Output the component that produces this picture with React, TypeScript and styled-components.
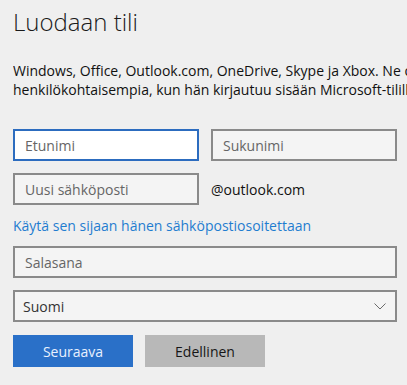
import React from "react";
import styled, { createGlobalStyle } from "styled-components";

const GlobalStyle = createGlobalStyle`
  html, body {
    margin: 0;
    padding: 0;
    background: #efefef;
    overflow: hidden;
  }
  body {
    font-family: "Open Sans", "Noto Sans", sans-serif;
    color: #000;
  }
`;

class App extends React.Component {
  render() {
    return (
      <Page>
        <GlobalStyle />
        <Title>Luodaan tili</Title>
        <Intro>
          <IntroLine>
            Windows, Office, Outlook.com, OneDrive, Skype ja Xbox. Ne ovat parhaimmillaan ja
          </IntroLine>
          <IntroLine>
            henkilökohtaisempia, kun hän kirjautuu sisään Microsoft-tilillään.
          </IntroLine>
        </Intro>
        <Form>
          <NameRow>
            <Field placeholder="Etunimi" $focused />
            <Field placeholder="Sukunimi" />
          </NameRow>
          <NameRow>
            <Field placeholder="Uusi sähköposti" />
            <Domain>@outlook.com</Domain>
          </NameRow>
          <Link>Käytä sen sijaan hänen sähköpostiosoitettaan</Link>
          <Field placeholder="Salasana" type="password" />
          <Select>
            <span>Suomi</span>
            <svg width="12" height="7" viewBox="0 0 12 7">
              <path d="M0.5 0.5 L6 6 L11.5 0.5" fill="none" stroke="#6b6b6b" strokeWidth="1" />
            </svg>
          </Select>
          <Buttons>
            <Button $primary>Seuraava</Button>
            <Button>Edellinen</Button>
          </Buttons>
        </Form>
      </Page>
    );
  }
}

const Page = styled.div`
  display: flex;
  flex-direction: column;
  padding: 4px 0 0 13px;
  width: 394px;
  overflow: hidden;
`;

const Title = styled.h1`
  margin: 0;
  font-size: 24px;
  font-weight: 300;
  line-height: 36px;
  color: #1a1a1a;
`;

const Intro = styled.div`
  margin-top: 21px;
  font-size: 14px;
  line-height: 19px;
  color: #111;
  overflow: hidden;
`;

const IntroLine = styled.div`
  white-space: nowrap;
`;

const Form = styled.div`
  display: flex;
  flex-direction: column;
  gap: 12px;
  margin-top: 30px;
  width: 384px;
`;

const NameRow = styled.div`
  display: grid;
  grid-template-columns: 186px 186px;
  column-gap: 12px;
  align-items: center;
`;

const Field = styled.input<{ $focused?: boolean }>`
  box-sizing: border-box;
  width: 100%;
  height: 32px;
  margin: 0;
  padding: 0 10px;
  border: 2px solid ${(p) => (p.$focused ? "#2c6cbf" : "#8a8a8a")};
  background: ${(p) => (p.$focused ? "#ffffff" : "#f4f4f4")};
  font-family: "Open Sans", "Noto Sans", sans-serif;
  font-size: 14px;
  color: #222;
  outline: none;
  &::placeholder {
    color: #666;
  }
`;

const Domain = styled.div`
  font-size: 14px;
  color: #111;
`;

const Link = styled.div`
  font-size: 14px;
  line-height: 20px;
  color: #1f7dd0;
  margin: -1px 0 -2px;
`;

const Select = styled.div`
  box-sizing: border-box;
  display: flex;
  align-items: center;
  justify-content: space-between;
  height: 32px;
  padding: 0 9px 0 8px;
  border: 2px solid #8a8a8a;
  background: #f4f4f4;
  font-size: 14px;
  color: #333;
`;

const Buttons = styled.div`
  display: flex;
  gap: 12px;
  margin-top: 1px;
`;

const Button = styled.div<{ $primary?: boolean }>`
  display: flex;
  align-items: center;
  justify-content: center;
  width: 120px;
  height: 32px;
  font-size: 14px;
  background: ${(p) => (p.$primary ? "#2a70c8" : "#b8b8b8")};
  color: ${(p) => (p.$primary ? "#e8f1ff" : "#161616")};
`;

export default App;
